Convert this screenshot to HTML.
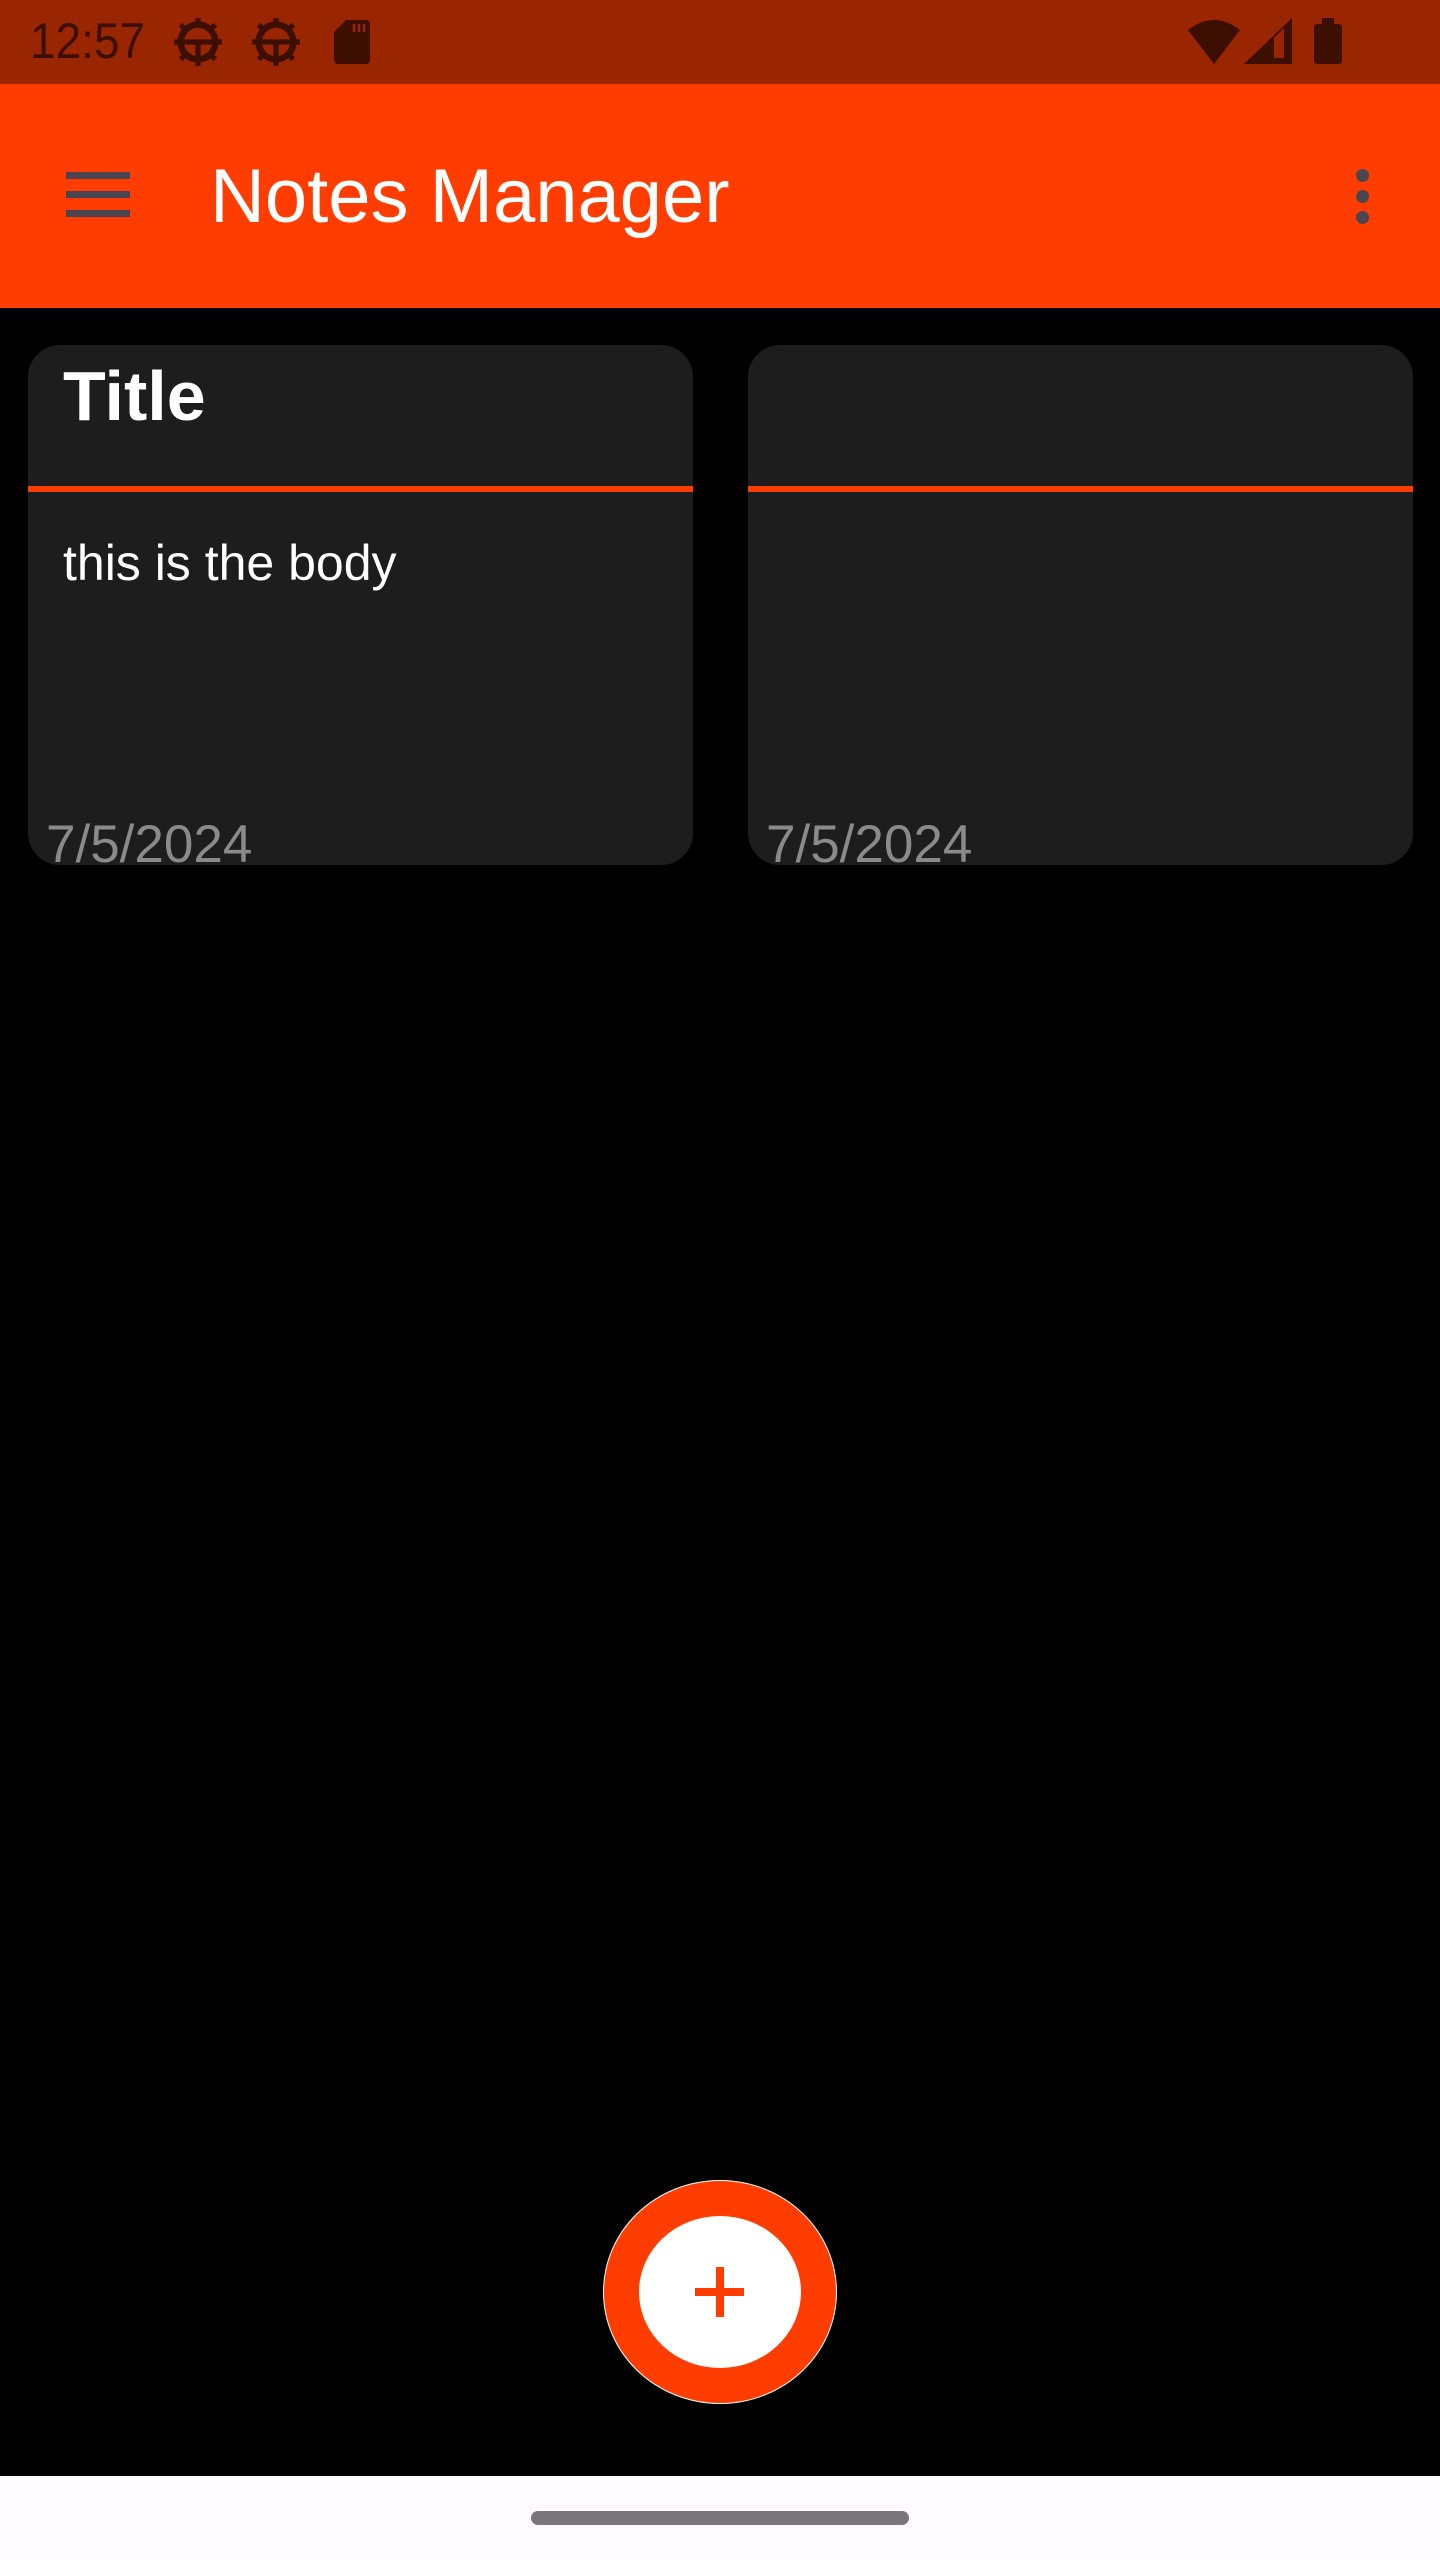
<!DOCTYPE html>
<html><head><meta charset="utf-8"><style>
*{margin:0;padding:0;box-sizing:border-box}
body{width:1440px;height:2560px;background:#000;position:relative;overflow:hidden;font-family:"Liberation Sans",sans-serif}
.sb{position:absolute;left:0;top:0;width:1440px;height:84px;background:#992600}
.ab{position:absolute;left:0;top:84px;width:1440px;height:224px;background:#ff3d00}
.card{position:absolute;top:345px;width:665px;height:520px;background:#1d1d1d;border-radius:32px;overflow:hidden}
.line{position:absolute;left:0;top:141px;width:100%;height:6px;background:#ff3d00}
.date{position:absolute;top:818px;font-size:53px;color:#8a8a8a;line-height:1}
</style></head><body>
<div class="sb">
<div style="position:absolute;left:30px;top:16px;font-size:50px;color:#3d0f00;line-height:1;transform:scaleX(.92);transform-origin:left">12:57</div>
<svg style="position:absolute;left:170px;top:16px" width="56" height="52" viewBox="0 0 24 24"><circle cx="12" cy="12" r="8" fill="none" stroke="#3d0f00" stroke-width="3"/><path d="M12 1v4M12 19v4M1 12h4M19 12h4M4 4l3 3M17 17l3 3M20 4l-3 3M4 20l3-3M5 12h14M12 12v7" stroke="#3d0f00" stroke-width="2.4"/></svg>
<svg style="position:absolute;left:248px;top:16px" width="56" height="52" viewBox="0 0 24 24"><circle cx="12" cy="12" r="8" fill="none" stroke="#3d0f00" stroke-width="3"/><path d="M12 1v4M12 19v4M1 12h4M19 12h4M4 4l3 3M17 17l3 3M20 4l-3 3M4 20l3-3M5 12h14M12 12v7" stroke="#3d0f00" stroke-width="2.4"/></svg>
<svg style="position:absolute;left:334px;top:20px" width="36" height="44" viewBox="0 0 18 22"><path d="M6 0h10a2 2 0 0 1 2 2v18a2 2 0 0 1-2 2H2a2 2 0 0 1-2-2V6z" fill="#3d0f00"/><path d="M10 2v4M12.5 2v4M15 2v4" stroke="#992600" stroke-width="1.2"/></svg>
<svg style="position:absolute;left:1186px;top:20px" width="56" height="44" viewBox="0 0 28 22"><path d="M14 22L1 5Q14-5 27 5z" fill="#3d0f00"/></svg>
<svg style="position:absolute;left:1244px;top:18px" width="48" height="46" viewBox="0 0 24 23"><path d="M0 23L24 0v23z" fill="#3d0f00"/><path d="M15 10v10h5V5z" fill="#992600"/></svg>
<svg style="position:absolute;left:1314px;top:18px" width="28" height="46" viewBox="0 0 14 23"><rect x="4" y="0" width="6" height="3" fill="#3d0f00"/><rect x="0" y="3" width="14" height="20" rx="1.5" fill="#3d0f00"/></svg>
</div>
<div class="ab">
<div style="position:absolute;left:66px;top:88px;width:64px;height:7px;background:#4a4550"></div>
<div style="position:absolute;left:66px;top:107px;width:64px;height:7px;background:#4a4550"></div>
<div style="position:absolute;left:66px;top:126px;width:64px;height:7px;background:#4a4550"></div>
<div style="position:absolute;left:210px;top:75px;font-size:76px;color:#fff;line-height:1">Notes Manager</div>
<div style="position:absolute;left:1356px;top:85px;width:13px;height:13px;border-radius:50%;background:#4a4550"></div>
<div style="position:absolute;left:1356px;top:106px;width:13px;height:13px;border-radius:50%;background:#4a4550"></div>
<div style="position:absolute;left:1356px;top:127px;width:13px;height:13px;border-radius:50%;background:#4a4550"></div>
</div>
<div class="card" style="left:28px">
<div style="position:absolute;left:35px;top:16px;font-size:70px;font-weight:bold;color:#fff;line-height:1">Title</div>
<div class="line"></div>
<div style="position:absolute;left:35px;top:193px;font-size:50px;color:#fff;line-height:1">this is the body</div>
</div>
<div class="date" style="left:46px">7/5/2024</div>
<div class="card" style="left:748px">
<div class="line"></div>
</div>
<div class="date" style="left:766px">7/5/2024</div>
<div style="position:absolute;left:603px;top:2180px;width:234px;height:224px;border-radius:50%;background:#ff3d00;border:1.5px solid #fff"></div>
<div style="position:absolute;left:639px;top:2216px;width:162px;height:152px;border-radius:50%;background:#fff"></div>
<div style="position:absolute;left:695px;top:2288px;width:49px;height:8px;background:#ff3d00"></div>
<div style="position:absolute;left:716px;top:2267px;width:8px;height:50px;background:#ff3d00"></div>
<div style="position:absolute;left:0;top:2476px;width:1440px;height:84px;background:#fffbff"></div>
<div style="position:absolute;left:531px;top:2511px;width:378px;height:14px;border-radius:7px;background:#79767a"></div>
</body></html>
